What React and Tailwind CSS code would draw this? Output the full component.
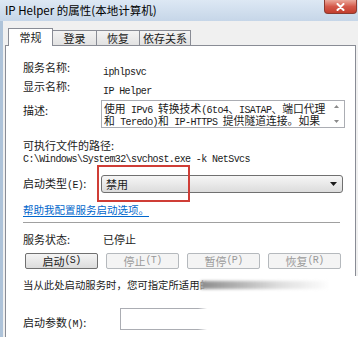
import React from 'react';

// Latin text in the dialog is drawn in a narrow monospace face
const M = ({ children }) => (
  <span className="font-['Liberation_Mono',monospace] text-[10px] tracking-[-0.6px] whitespace-pre">{children}</span>
);

const Tab = ({ label, active, w }) =>
  active ? (
    <div className={`${w} h-[18px] -mb-px relative z-10 bg-white border border-b-0 border-[#898c95] flex items-center justify-center text-[11px] leading-none pb-[1px]`}>
      {label}
    </div>
  ) : (
    <div className={`${w} h-[15px] -ml-px border border-b-0 border-[#898c95] bg-linear-to-b from-[#f3f3f3] to-[#e2e2e2] flex items-center justify-center text-[11px] leading-none`}>
      {label}
    </div>
  );

const Btn = ({ label, k, disabled }) => (
  <div
    className={`w-[73px] h-[16px] rounded-[2px] border flex items-center justify-center text-[11px] leading-none ${
      disabled
        ? 'border-[#b5b9bd] bg-[#f4f4f4] text-[#9a9a9a]'
        : 'border-[#707070] bg-linear-to-b from-[#f4f4f4] to-[#dcdcdc] text-[#1a1a1a]'
    }`}
  >
    {label}
    <M>{`(${k})`}</M>
  </div>
);

const Row = ({ label, children, h = 'h-[19px]', extra = '' }) => (
  <div className={`flex items-center ${h} ${extra}`}>
    <div className="w-[78px] shrink-0 text-[11px] leading-none">{label}</div>
    {children}
  </div>
);

export default function App() {
  return (
    <div className="w-[358px] h-[337px] overflow-hidden relative flex flex-col bg-[#aec3d9] text-[#1a1a1a] font-['Noto_Sans_CJK_SC',sans-serif]">
      {/* title bar */}
      <div className="h-[21px] shrink-0 flex items-start justify-between bg-linear-to-b from-[#dde8f4] to-[#c6d6e8]">
        <div className="pl-[5px] pt-[1px] text-[11.5px] leading-[18px] text-black">IP Helper 的属性(本地计算机)</div>
        <div className="w-[33px] h-[14px] mr-[1px] rounded-b-[4px] border border-t-0 border-[#8b3a30] bg-linear-to-b from-[#eaa89c] via-[#d4594b] to-[#c23e2e] flex items-center justify-center">
          <svg width="9" height="8" viewBox="0 0 9 8">
            <path d="M1.5 1 L7.5 7 M7.5 1 L1.5 7" stroke="#fff" strokeWidth="2" strokeLinecap="round" />
          </svg>
        </div>
      </div>

      {/* window body */}
      <div className="flex-1 ml-[3px] bg-[#f0f0f0] pt-[7px] flex flex-col">
        <div className="pl-[5px] h-[17px] flex items-end">
          <Tab label="常规" active w="w-[45px]" />
          <Tab label="登录" w="w-[45px]" />
          <Tab label="恢复" w="w-[44px]" />
          <Tab label="依存关系" w="w-[52px]" />
        </div>

        <div className="flex-1 ml-[2px] mr-[2px] bg-white border border-b-0 border-[#898c95] pl-[17px] pt-[12px]">
          <Row label="服务名称:">
            <div className="pl-[2px]"><M>iphlpsvc</M></div>
          </Row>
          <Row label="显示名称:">
            <div className="pl-[2px]"><M>IP Helper</M></div>
          </Row>

          <div className="mt-[4px] flex items-start h-[28px]">
            <div className="w-[78px] shrink-0 text-[11px] leading-none pt-[5px]">描述:</div>
            <div className="w-[244px] h-[28px] border border-[#abadb3] flex">
              <div className="flex-1 pl-[2px] pt-[1px] text-[10.8px] whitespace-nowrap">
                <div className="h-[12px] leading-[12px]">使用<M> IPv6 </M>转换技术<M>(6to4</M>、<M>ISATAP</M>、端口代理</div>
                <div className="h-[12px] leading-[12px]">和<M> Teredo)</M>和<M> IP-HTTPS </M>提供隧道连接。如果</div>
              </div>
              <div className="w-[16px] flex flex-col items-center justify-between py-[4px]">
                <svg width="5" height="3" viewBox="0 0 5 3"><path d="M0 3 L2.5 0 L5 3Z" fill="#8a8a8a" /></svg>
                <svg width="5" height="3" viewBox="0 0 5 3"><path d="M0 0 L2.5 3 L5 0Z" fill="#8a8a8a" /></svg>
              </div>
            </div>
          </div>

          <div className="mt-[10px] h-[14px] flex items-center text-[11px] leading-none">可执行文件的路径:</div>
          <div className="h-[14px] flex items-center">
            <M>C:\Windows\System32\svchost.exe -k NetSvcs</M>
          </div>

          <Row label={<>启动类型<M>(E)</M>:</>} h="h-[18px]" extra="mt-[9px]">
            <div className="w-[242px] h-[18px] rounded-[3px] border border-[#707070] bg-linear-to-b from-[#f6f6f6] to-[#dcdcdc] flex items-center justify-between pl-[4px] pr-[5px]">
              <span className="text-[11px] leading-none">禁用</span>
              <svg width="7" height="4" viewBox="0 0 7 4"><path d="M0 0 L7 0 L3.5 4Z" fill="#1a1a1a" /></svg>
            </div>
          </Row>

          <div className="mt-[10px] h-[14px] flex items-center">
            <span className="text-[10.5px] leading-none text-[#0066cc] underline underline-offset-2">帮助我配置服务启动选项。</span>
          </div>

          <div className="mt-[5px] w-[317px] h-px bg-[#a0a0a0]" />

          <Row label="服务状态:" h="h-[14px]" extra="mt-[9px]">
            <div className="pl-[2px] text-[11px] leading-none">已停止</div>
          </Row>

          <div className="mt-[7px] ml-[2px] flex gap-[8px]">
            <Btn label="启动" k="S" />
            <Btn label="停止" k="T" disabled />
            <Btn label="暂停" k="P" disabled />
            <Btn label="恢复" k="R" disabled />
          </div>

          <div className="mt-[9px] h-[14px] flex items-center text-[10.4px] leading-none whitespace-nowrap">
            当从此处启动服务时，您可指定所适用的启动参数。
          </div>

          <div className="mt-[16px] flex items-start">
            <div className="w-[97px] shrink-0 text-[11px] leading-none pt-[9px]">启动参数<M>(M)</M>:</div>
            <div className="w-[220px] h-[22px] border border-[#abadb3] bg-white" />
          </div>
        </div>
      </div>

      {/* red highlight drawn over the startup type */}
      <div className="absolute left-[97px] top-[165px] w-[93px] h-[37px] border-2 border-[#cf3d36]" />

      {/* blurred / faded lower right corner of the photo */}
      <div className="absolute left-[198px] top-[276px] right-0 bottom-0 bg-[linear-gradient(to_right,rgba(255,255,255,0),#fff_9px,#fff)] z-10" />
      <div className="absolute left-[201px] top-[281px] w-[130px] h-[8px] blur-[1.5px] bg-[linear-gradient(to_right,#8c8c8c,rgba(200,200,200,0.6)_60%,rgba(255,255,255,0))] z-20" />
    </div>
  );
}
